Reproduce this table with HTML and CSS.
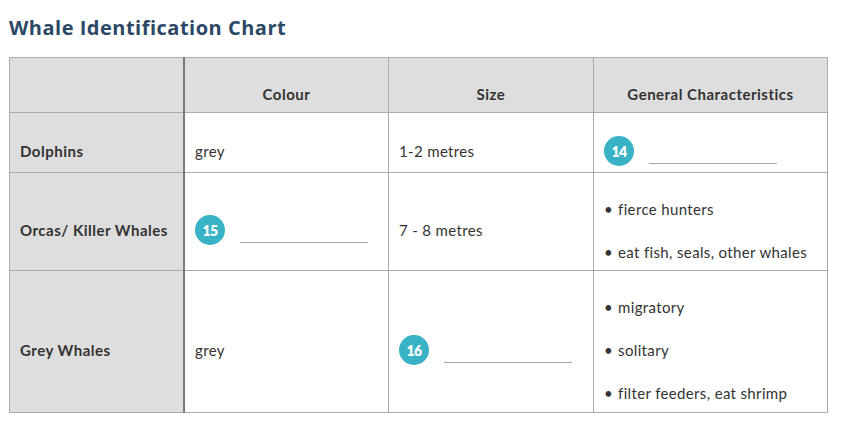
FILE: index.html
```html
<!DOCTYPE html>
<html>
<head>
<meta charset="utf-8">
<link rel="stylesheet" href="styles.css">
</head>
<body>
<h1 class="title">Whale Identification Chart</h1>
<table class="chart">
  <tr class="row-head">
    <th class="label"></th>
    <th>Colour</th>
    <th>Size</th>
    <th>General Characteristics</th>
  </tr>
  <tr class="row-1">
    <td class="label">Dolphins</td>
    <td>grey</td>
    <td>1-2 metres</td>
    <td><div class="blank"><span class="badge">14</span><span class="line"></span></div></td>
  </tr>
  <tr class="row-2">
    <td class="label">Orcas/ Killer Whales</td>
    <td><div class="blank"><span class="badge">15</span><span class="line"></span></div></td>
    <td>7 - 8 metres</td>
    <td>
      <ul class="bullets">
        <li>fierce hunters</li>
        <li>eat fish, seals, other whales</li>
      </ul>
    </td>
  </tr>
  <tr class="row-3">
    <td class="label">Grey Whales</td>
    <td>grey</td>
    <td><div class="blank"><span class="badge">16</span><span class="line"></span></div></td>
    <td>
      <ul class="bullets">
        <li>migratory</li>
        <li>solitary</li>
        <li>filter feeders, eat shrimp</li>
      </ul>
    </td>
  </tr>
</table>
</body>
</html>
```
FILE: styles.css
```css
html, body {
  margin: 0;
  padding: 0;
  background: #ffffff;
}
body {
  padding: 14px 9px 0 9px;
  font-family: Lato, "Open Sans", sans-serif;
  color: #333333;
}
.title {
  margin: 0 0 16px 0;
  font-family: "Open Sans", sans-serif;
  font-weight: 700;
  font-size: 20px;
  line-height: 27px;
  color: #2b4865;
  letter-spacing: 0.5px;
}
.chart {
  border-collapse: collapse;
  width: 819px;
  font-size: 15px;
  letter-spacing: 0.35px;
}
.chart th, .chart td {
  border: 1px solid #ababab;
  padding: 17px 10px 0 10px;
  vertical-align: middle;
  text-align: left;
}
.chart th {
  background: #dedede;
  font-weight: 700;
  text-align: center;
  letter-spacing: 0.5px;
}
.chart .label {
  background: #dedede;
  font-weight: 700;
  width: 153px;
  border-right: 2px solid #7a7a7a;
  padding-left: 10px;
  letter-spacing: 0.5px;
}
.chart th:nth-child(2), .chart td:nth-child(2) { width: 183px; }
.chart th:nth-child(3), .chart td:nth-child(3) { width: 184px; }
.row-head { height: 55px; }
.row-1 { height: 60px; }
.row-2 { height: 98px; }
.row-3 { height: 142px; }
.blank {
  display: flex;
  align-items: center;
  gap: 15px;
}
.badge {
  width: 30px;
  height: 30px;
  border-radius: 50%;
  background: #38b2c5;
  color: #ffffff;
  font-weight: 800;
  font-size: 14px;
  display: flex;
  align-items: center;
  justify-content: center;
  letter-spacing: -0.5px;
}
.line {
  width: 128px;
  height: 1px;
  background: #a5a5a5;
  margin-top: 25px;
}
.bullets {
  list-style: none;
  margin: 0;
  padding: 0;
}
.bullets li {
  line-height: 22px;
  margin-bottom: 21px;
}
.bullets li:last-child { margin-bottom: 0; }
.bullets li::before {
  content: "\2022";
  margin-right: 5px;
}
```
